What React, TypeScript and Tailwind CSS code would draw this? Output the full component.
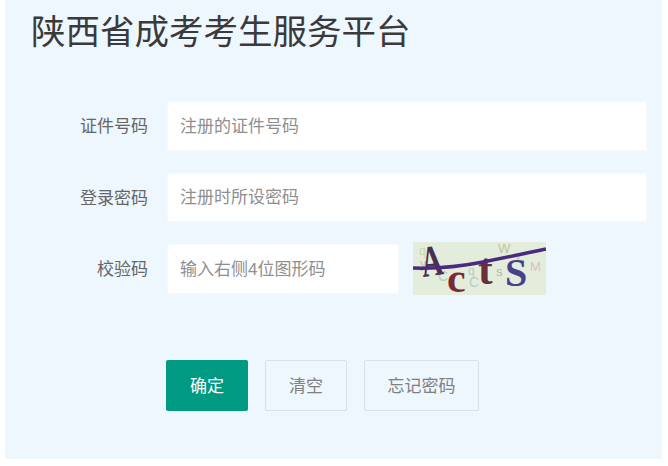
const Field = ({ label, placeholder, short }: { label: string; placeholder: string; short?: boolean }) => {
  return (
    <div className="flex items-center h-[49.5px]">
      <label className="w-[143px] pt-[2px] text-right text-[17px] text-[#666]">{label}</label>
      <input
        readOnly
        placeholder={placeholder}
        className={`ml-[19px] h-full rounded-[2px] border border-[#f7fafd] bg-white px-[12px] pt-[2px] text-[17px] outline-none placeholder:text-[#8f8f8f] ${short ? "w-[232px]" : "w-[480px]"}`}
      />
      {short && <Captcha />}
    </div>
  );
};

const Captcha = () => {
  return (
    <svg width="133" height="53" viewBox="0 0 133 53" className="ml-[14px] shrink-0">
      <rect width="133" height="53" fill="#e4eddc" />
      <g fontFamily="'Liberation Sans', sans-serif" fontSize="12" opacity="0.6">
        <text x="6" y="13" fill="#b7c98f">q</text>
        <text x="7" y="26" fill="#a3a98f">y</text>
        <text x="25" y="39" fill="#8fc0b0" fontSize="14">C</text>
        <text x="55" y="33" fill="#8fb5b5">q</text>
        <text x="56" y="45" fill="#8fc0b0" fontSize="14">C</text>
        <text x="83" y="34" fill="#6f9fa5" fontSize="13">s</text>
        <text x="85" y="11" fill="#a6a872" fontSize="13">W</text>
        <text x="102" y="18" fill="#a8b8a0">v</text>
        <text x="117" y="29" fill="#c8a8b8" fontSize="13">M</text>
      </g>
      <g fontFamily="'Liberation Serif', serif" fontWeight="700">
        <text transform="translate(10 35) rotate(-8) scale(0.68 1)" fontSize="44" fill="#4a2f4e">A</text>
        <text x="34" y="50" fontSize="42" fill="#7a2a35">c</text>
        <text x="65" y="42" fontSize="44" fill="#6a2f3a">t</text>
        <text x="92" y="44" fontSize="40" fill="#47408a">S</text>
      </g>
      <path d="M0 26 C30 27 50 24 70 20 S110 12 133 7" fill="none" stroke="#4a2a80" strokeWidth="3.5" />
    </svg>
  );
};

export default function App() {
  return (
    <div className="h-[466px] w-[668px] overflow-hidden bg-white font-['Liberation_Sans','Noto_Sans_CJK_SC',sans-serif]">
      <div className="ml-[5px] h-[459px] w-[657px] bg-[#eef6fe]">
        <h1 className="pl-[26px] pt-[11px] text-[34.5px] leading-[42px] font-normal text-[#3a3a3a]">陕西省成考考生服务平台</h1>
        <div className="mt-[48px] flex flex-col gap-[22px]">
          <Field label="证件号码" placeholder="注册的证件号码" />
          <Field label="登录密码" placeholder="注册时所设密码" />
          <Field label="校验码" placeholder="输入右侧4位图形码" short />
        </div>
        <div className="mt-[66.5px] ml-[161px] flex gap-[17px] text-[17px]">
          <button className="h-[51px] w-[82px] rounded-[2px] bg-[#009a82] pt-[2px] text-white">确定</button>
          <button className="h-[51px] w-[82px] rounded-[2px] border border-[#dcdfe3] pt-[2px] text-[#808080]">清空</button>
          <button className="h-[51px] w-[115px] rounded-[2px] border border-[#dcdfe3] pt-[2px] text-[#808080]">忘记密码</button>
        </div>
      </div>
    </div>
  );
}
